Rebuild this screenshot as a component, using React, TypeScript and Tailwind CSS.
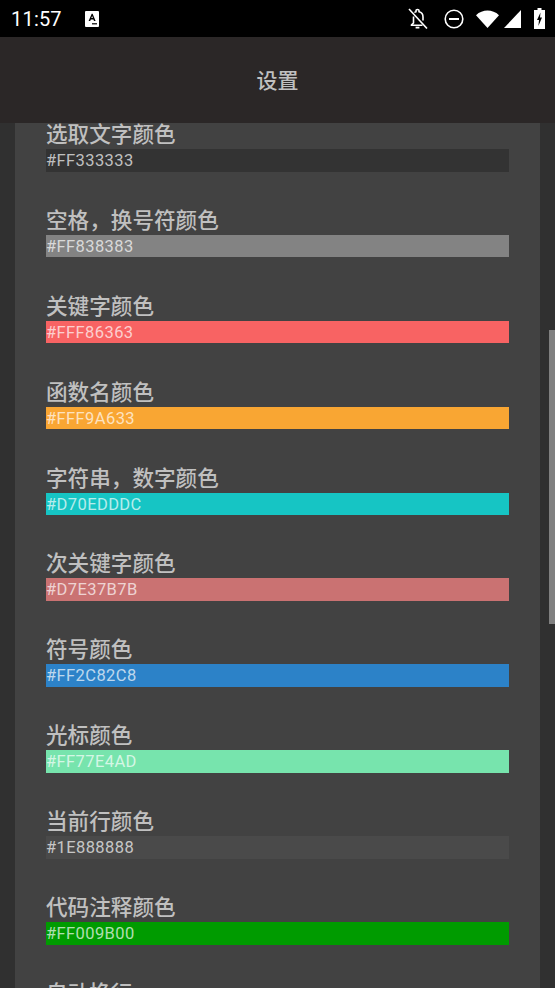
import React from 'react';

const rows = [
    { title: '选取文字颜色', value: '#FF333333', bg: 'bg-[#333333]' },
    { title: '空格，换号符颜色', value: '#FF838383', bg: 'bg-[#838383]' },
    { title: '关键字颜色', value: '#FFF86363', bg: 'bg-[#f86363]' },
    { title: '函数名颜色', value: '#FFF9A633', bg: 'bg-[#f9a633]' },
    { title: '字符串，数字颜色', value: '#D70EDDDC', bg: 'bg-[#16c5c4]' },
    { title: '次关键字颜色', value: '#D7E37B7B', bg: 'bg-[#ca7272]' },
    { title: '符号颜色', value: '#FF2C82C8', bg: 'bg-[#2c82c8]' },
    { title: '光标颜色', value: '#FF77E4AD', bg: 'bg-[#77e4ad]' },
    { title: '当前行颜色', value: '#1E888888', bg: 'bg-[#4a4a4a]' },
    { title: '代码注释颜色', value: '#FF009B00', bg: 'bg-[#009b00]' },
];

const cjk = "font-['Noto_Sans_CJK_SC','Noto_Sans',sans-serif]";

const StatusBar = () => (
    <div className="h-[37px] shrink-0 bg-black flex items-center justify-between pl-[11px] pr-[10px] text-white">
        <div className="flex items-center">
            <span className="text-[20px] font-['Roboto',sans-serif] leading-none tracking-[0.2px] w-[74px]">11:57</span>
            <svg width="14" height="16" viewBox="0 0 14 16">
                <rect x="0" y="0" width="14" height="16" rx="1" fill="#fff" />
                <path d="M3.6 10 L6.7 2.8 L7.6 2.8 L10.6 10 H9 L8.4 8.4 H5.8 L5.2 10 Z M6.3 7.1 H7.9 L7.1 5 Z" fill="#000" />
                <rect x="7" y="12.2" width="5" height="1.2" fill="#000" />
            </svg>
        </div>
        <div className="flex items-center">
            {/* bell off */}
            <svg width="20" height="21" viewBox="0 0 20 21" fill="none" className="mr-[16px]">
                <path d="M5.5 8.5 V15 L3.5 16.8 V17.3 H14.5 M15 12.5 V9 C15 6.2 13.4 4.2 11 3.7 V2.6 C11 1.2 8 1.2 8 2.6 V3.7 C7.4 3.9 6.9 4.1 6.4 4.5" stroke="#fff" strokeWidth="1.6" />
                <path d="M7.6 19.6 H11.4" stroke="#fff" strokeWidth="1.8" />
                <path d="M1 1 L19 20.5" stroke="#fff" strokeWidth="1.6" />
            </svg>
            {/* do not disturb */}
            <svg width="20" height="20" viewBox="0 0 20 20" fill="none" className="mr-[12px]">
                <circle cx="10" cy="10" r="8.8" stroke="#fff" strokeWidth="1.6" />
                <rect x="5" y="9" width="10" height="2" fill="#fff" />
            </svg>
            {/* wifi */}
            <svg width="23" height="18" viewBox="0 0 23 18" className="mr-[5px]">
                <path d="M0 5.2 C6.5 -1 16.5 -1 23 5.2 L11.5 18 Z" fill="#fff" />
            </svg>
            {/* signal */}
            <svg width="17" height="18" viewBox="0 0 17 18" className="mr-[13px]">
                <path d="M17 0 V18 H0 Z" fill="#fff" />
            </svg>
            {/* battery charging */}
            <svg width="11" height="21" viewBox="0 0 11 21">
                <path d="M3.5 0 H7.5 V2 H11 V21 H0 V2 H3.5 Z" fill="#fff" />
                <path d="M6.5 4.5 L3 12 H5 L4.4 18 L8 9.5 H6 Z" fill="#000" />
            </svg>
        </div>
    </div>
);

const ColorRow = ({ title, value, bg }: { title: string; value: string; bg: string }) => (
    <div className="h-[85.9px] pt-[2px]">
        <div className={`text-[21.6px] font-medium leading-[29px] h-[31px] text-[#c0c0c0] ${cjk}`}>{title}</div>
        <div className={`h-[22.5px] ${bg} text-[16.5px] leading-[24.5px] tracking-[0.4px] text-white/70 font-['Roboto',sans-serif]`}>{value}</div>
    </div>
);

export default function App() {
    return (
        <div className="relative w-[555px] h-[988px] overflow-hidden bg-[#303030] flex flex-col">
            <StatusBar />
            <div className={`h-[86px] shrink-0 bg-[#2b2727] flex items-center justify-center text-[21px] font-medium text-[#c0c0c0] z-10 ${cjk}`}>
                设置
            </div>
            <div className="flex-1 overflow-hidden px-[15px]">
                <div className="w-[525px] bg-[#424242] px-[31px] -mt-[7px] h-[900px]">
                    {rows.map((r) => (
                        <ColorRow key={r.value} {...r} />
                    ))}
                    <ColorRow title="自动换行" value="" bg="" />
                </div>
            </div>
            <div className="absolute right-0 top-[330px] w-[6px] h-[294px] bg-[#808080]" />
        </div>
    );
}
